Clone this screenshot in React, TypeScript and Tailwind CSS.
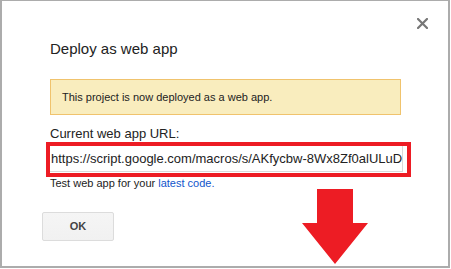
export default function App() {
  return (
    <div className="relative w-[451px] h-[269px] bg-white font-['Liberation_Sans',Arial,sans-serif] text-[#222]">
      <div className="relative w-[450px] h-[268px] border-t border-l-2 border-r-2 border-b-2 border-[#acacac] bg-white">
        {/* close */}
        <svg className="absolute left-[415px] top-[17px]" width="11" height="11" viewBox="0 0 11 11">
          <path d="M1 1 L10 10 M10 1 L1 10" stroke="#777" strokeWidth="2.2" strokeLinecap="square" />
        </svg>

        <div className="pl-[48px] pt-[39px]">
          <h2 className="text-[15px] leading-[18px] font-normal text-[#222]">Deploy as web app</h2>

          <div className="mt-[21px] w-[351px] h-[36px] flex items-center px-[11px] bg-[#f9edbe] border border-[#f0c36d] text-[11px] text-[#222]">
            This project is now deployed as a web app.
          </div>

          <div className="mt-[11px] text-[13px] leading-[16px]">Current web app URL:</div>

          <div className="-ml-[4px] w-[365px] border-4 border-[#ed1c24] pb-[1px] flex">
            <div className="w-[353px] h-[26px] border-r border-b border-[#d9d9d9] pl-[1px] whitespace-nowrap text-[13px] leading-[25px] text-[#222]">
              https://script.google.com/macros/s/AKfycbw-8Wx8Zf0alULuD
            </div>
          </div>

          <div className="text-[11px] leading-[13px]">
            Test web app for your <span className="text-[#15c]">latest code.</span>
          </div>

          <button className="mt-[22px] -ml-[8px] w-[72px] h-[29px] rounded-[2px] border border-[#dcdcdc] bg-gradient-to-b from-[#f5f5f5] to-[#f1f1f1] text-[11px] font-bold text-[#444]">
            OK
          </button>
        </div>
      </div>

      {/* annotation arrow */}
      <svg className="absolute left-[302px] top-[189px]" width="66" height="76" viewBox="0 0 66 76">
        <polygon points="15,0 51,0 51,34 66,34 33,75 0,34 15,34" fill="#ed1c24" />
      </svg>
    </div>
  );
}
